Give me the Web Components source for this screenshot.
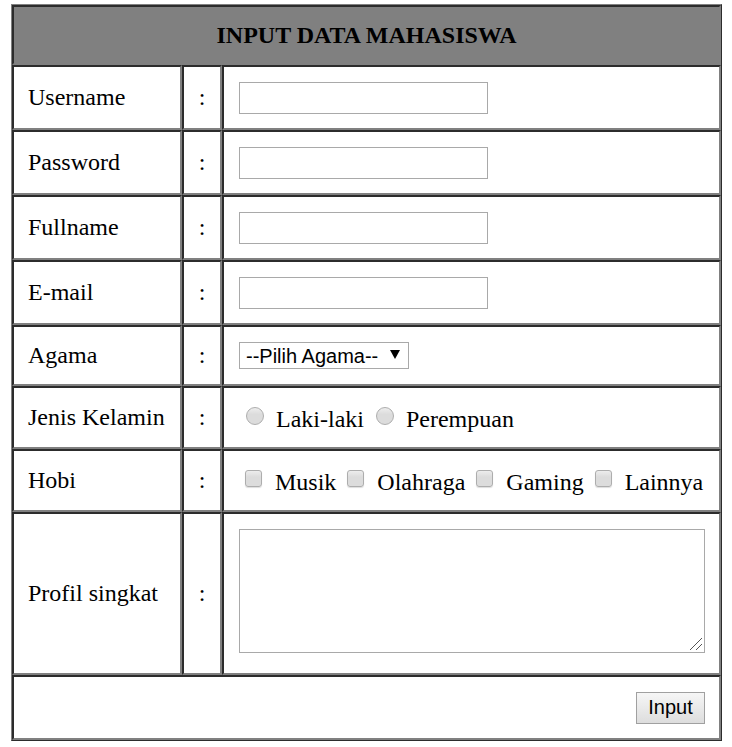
<!DOCTYPE html>
<html lang="id">
<head>
<meta charset="utf-8">
<title>Input Data Mahasiswa</title>
<style>
body { margin: 4px 10px 6px 11px; background: #fff; color: #000; font: 24px/26px "Liberation Serif", "Times New Roman", serif; }
</style>
</head>
<body>
<form-sheet>
  <title-row>INPUT DATA MAHASISWA</title-row>
  <text-row label="Username"></text-row>
  <text-row label="Password" type="password"></text-row>
  <text-row label="Fullname"></text-row>
  <text-row label="E-mail" type="email"></text-row>
  <select-row label="Agama" prompt="--Pilih Agama--"></select-row>
  <choice-row label="Jenis Kelamin" type="radio" options="Laki-laki,Perempuan"></choice-row>
  <choice-row label="Hobi" type="checkbox" options="Musik,Olahraga,Gaming,Lainnya"></choice-row>
  <area-row label="Profil singkat"></area-row>
  <submit-row>Input</submit-row>
</form-sheet>

<script>
const cellStyle = `
  :host { display: block; }
  * { box-sizing: border-box; }
  .row { display: grid; grid-template-columns: 170px 40px minmax(0, 1fr); }
  .cell {
    display: flex; align-items: center; padding: 14px 14px 16px;
    border: 2px solid; border-color: #2c2c2c #808080 #808080 #2c2c2c;
    white-space: nowrap;
  }
  .colon { justify-content: center; }
  .control { padding: 15px 14px 15px 15px; }
  input, select, textarea, button {
    margin: 0; border: 1px solid #a9a9a9; border-radius: 0; color: #000;
    font: 20px/24px "Liberation Sans", Arial, sans-serif;
  }
`;

class SheetElement extends HTMLElement {
  connectedCallback() {
    if (this.shadowRoot) return;
    this.attachShadow({ mode: "open" }).innerHTML = `<style>${cellStyle}${this.styles()}</style>${this.markup()}`;
  }
  styles() { return ""; }
}

class FormSheet extends SheetElement {
  styles() { return `form { border: 1px solid; border-color: #808080 #2c2c2c #2c2c2c #808080; }`; }
  markup() { return `<form><slot></slot></form>`; }
}

class TitleRow extends SheetElement {
  styles() {
    return `h1 { margin: 0; min-height: 60px; justify-content: center; background: #808080; font-size: 24px; }
      h1.cell { padding: 15px; }`;
  }
  markup() { return `<h1 class="cell"><slot></slot></h1>`; }
}

class FieldRow extends SheetElement {
  markup() {
    const label = this.getAttribute("label");
    return `<div class="row">
      <div class="cell"><label id="name" for="field">${label}</label></div>
      <div class="cell colon">:</div>
      <div class="cell control">${this.control()}</div>
    </div>`;
  }
}

class TextRow extends FieldRow {
  styles() {
    return `.control { padding-bottom: 14px; }
      input { width: 249px; max-width: 100%; height: 32px; padding: 1px 3px; background: #fff; }`;
  }
  control() { return `<input id="field" type="${this.getAttribute("type") || "text"}">`; }
}

class SelectRow extends FieldRow {
  styles() {
    return `.picker { position: relative; }
      .row { min-height: 61px; }
      select { display: block; width: 170px; height: 27px; padding: 0 6px; appearance: none; background: #fff; }
      svg { position: absolute; right: 9px; top: 8px; width: 10px; height: 9px; pointer-events: none; }`;
  }
  control() {
    return `<div class="picker"><select id="field"><option>${this.getAttribute("prompt")}</option></select>
      <svg viewBox="0 0 10 9" aria-hidden="true"><path d="M0 0H10L5 9Z"/></svg></div>`;
  }
}

class ChoiceRow extends FieldRow {
  styles() {
    return `.row { min-height: 63px; }
      .control { padding-top: 17px; padding-bottom: 14px; line-height: 28px; }
      .choices { display: flex; gap: 5px; }
      .choice { display: flex; }
      input { appearance: none; flex: none; border-color: #adadad; background: linear-gradient(#ededed, #dcdcdc 40%, #dcdcdc); }
      input[type=radio] { width: 18px; height: 18px; margin: 2px 12px 0 7px; border-radius: 50%; }
      input[type=checkbox] { width: 17px; height: 17px; margin: 2px 13px 0 6px; border-radius: 3px; box-shadow: 0 1px 1px #ddd; }
      input:checked { background: #555; }`;
  }
  control() {
    const type = this.getAttribute("type");
    const choices = this.getAttribute("options").split(",").map((text, i) =>
      `<label class="choice"><input type="${type}" name="choice" value="${text}"${i ? "" : ' id="field"'}>${text}</label>`);
    return `<div class="choices" role="group" aria-labelledby="name">${choices.join("")}</div>`;
  }
}

class AreaRow extends FieldRow {
  styles() {
    return `.control { padding-bottom: 20px; }
      textarea { display: block; width: 100%; height: 124px; padding: 3px; background: #fff; resize: none; }
      .box { position: relative; width: 100%; }
      svg { position: absolute; right: 3px; bottom: 3px; width: 12px; height: 12px; fill: none; stroke: #555; pointer-events: none; }`;
  }
  control() {
    return `<div class="box"><textarea id="field"></textarea>
      <svg viewBox="0 0 12 12" aria-hidden="true"><path d="M0 12L12 0M6 12L12 6"/></svg></div>`;
  }
}

class SubmitRow extends SheetElement {
  styles() {
    return `.cell { justify-content: flex-end; padding: 15px 14px 14px; }
      button { width: 69px; height: 32px; padding: 0 0 2px; border-color: #a0a0a0; background: linear-gradient(#f6f6f6, #dddddd); }`;
  }
  markup() { return `<div class="cell"><button type="button"><slot></slot></button></div>`; }
}

customElements.define("form-sheet", FormSheet);
customElements.define("title-row", TitleRow);
customElements.define("text-row", TextRow);
customElements.define("select-row", SelectRow);
customElements.define("choice-row", ChoiceRow);
customElements.define("area-row", AreaRow);
customElements.define("submit-row", SubmitRow);
</script>
</body>
</html>
